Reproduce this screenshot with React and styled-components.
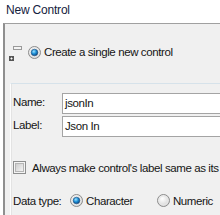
import React from "react";
import styled, { createGlobalStyle } from "styled-components";

const Global = createGlobalStyle`
  html, body { margin: 0; padding: 0; background: #ffffff; overflow: hidden; }
  body { font-family: "Liberation Sans", Arial, sans-serif; font-size: 11.5px; letter-spacing: -0.4px; color: #151515; }
`;

const Frame = styled.div`
  width: 220px;
  height: 215px;
  overflow: hidden;
  display: flex;
  flex-direction: column;
  background: #ffffff;
`;

const Title = styled.div`
  height: 23px;
  padding-left: 6px;
  line-height: 20px;
  font-size: 12px;
  letter-spacing: -0.2px;
  color: #14213d;
`;

const Panel = styled.div`
  flex: 1;
  margin-left: 3px;
  border-top: 1px solid #a0a0a0;
  border-left: 2px solid #8f8f8f;
  background: #f0f0f0;
  padding-top: 20px;
  display: flex;
  flex-direction: column;
`;

const TreeRow = styled.div`
  display: flex;
  align-items: center;
  height: 16px;
  padding-left: 3px;
`;

const RadioLabel = styled.label`
  display: flex;
  align-items: center;
  gap: ${(p) => p.$gap || 3}px;
  white-space: nowrap;
  margin-left: ${(p) => p.$ml || 0}px;
`;

const Group = styled.div`
  margin-top: 23px;
  margin-left: 5px;
  border-top: 1px solid #d6e2ea;
  border-left: 1px solid #fdfdfd;
  box-shadow: inset 1px 0 0 #e3e3e3;
  padding: 9px 0 0 2px;
  flex: 1;
  display: flex;
  flex-direction: column;
`;

const FormGrid = styled.div`
  display: grid;
  grid-template-columns: 49px 1fr;
  row-gap: 2px;
  align-items: center;
`;

const FieldLabel = styled.span`
  padding-bottom: 3px;
`;

const Input = styled.div`
  height: 19px;
  border: 1px solid #a4a4a4;
  border-right: none;
  background: #ffffff;
  padding-left: 2px;
  line-height: 19px;
  box-sizing: content-box;
`;

const CheckRow = styled.label`
  margin-top: 24px;
  display: flex;
  align-items: center;
  gap: 6px;
  white-space: nowrap;
  height: 13px;
`;

const DataRow = styled.div`
  margin-top: 20px;
  display: flex;
  align-items: center;
  height: 13px;
  white-space: nowrap;
`;

const DataLabel = styled.span`
  width: 57px;
`;

const ExpandIcon = () => (
  <svg width="16" height="18" viewBox="0 0 16 18" style={{ display: "block" }}>
    <rect x="5.5" y="3.5" width="8" height="3" fill="#f4f4f4" stroke="#9a9a9a" />
    <rect x="1" y="13" width="5" height="5" fill="#555" />
    <path d="M2.5 15.5h2M3.5 14.5v2" stroke="#fff" strokeWidth="1" />
  </svg>
);

const Radio = ({ checked }) => (
  <svg width="13" height="13" viewBox="0 0 13 13" style={{ display: "block", flex: "none" }}>
    <defs>
      <radialGradient id="rb" cx="0.4" cy="0.35" r="0.7">
        <stop offset="0" stopColor="#ffffff" />
        <stop offset="1" stopColor="#d2d2d2" />
      </radialGradient>
      <radialGradient id="dot" cx="0.4" cy="0.35" r="0.7">
        <stop offset="0" stopColor="#9fe2ff" />
        <stop offset="0.5" stopColor="#1b8fd6" />
        <stop offset="1" stopColor="#0b3f79" />
      </radialGradient>
    </defs>
    <circle cx="6.5" cy="6.5" r="6" fill="url(#rb)" stroke="#8c8c8c" strokeWidth="1" />
    <circle cx="6.5" cy="6.5" r="4.5" fill="none" stroke="#e8e8e8" strokeWidth="1" />
    {checked && <circle cx="6.5" cy="6.5" r="3.3" fill="url(#dot)" stroke="#1e4d7d" strokeWidth="0.6" />}
  </svg>
);

const Checkbox = () => (
  <svg width="13" height="13" viewBox="0 0 13 13" style={{ display: "block", flex: "none" }}>
    <defs>
      <linearGradient id="cb" x1="0" y1="0" x2="1" y2="1">
        <stop offset="0" stopColor="#cbcbcb" />
        <stop offset="1" stopColor="#f6f6f6" />
      </linearGradient>
    </defs>
    <rect x="0.5" y="0.5" width="12" height="12" fill="#f4f4f4" stroke="#8e8f8f" />
    <rect x="2.5" y="2.5" width="8" height="8" fill="url(#cb)" stroke="#b5b5b5" />
  </svg>
);

export default function App() {
  return (
    <>
      <Global />
      <Frame>
        <Title>New Control</Title>
        <Panel>
          <TreeRow>
            <ExpandIcon />
            <RadioLabel $ml={4}>
              <Radio checked />
              Create a single new control
            </RadioLabel>
          </TreeRow>
          <Group>
            <FormGrid>
              <FieldLabel>Name:</FieldLabel>
              <Input>jsonIn</Input>
              <FieldLabel>Label:</FieldLabel>
              <Input>Json In</Input>
            </FormGrid>
            <CheckRow>
              <Checkbox />
              Always make control's label same as its
            </CheckRow>
            <DataRow>
              <DataLabel>Data type:</DataLabel>
              <RadioLabel>
                <Radio checked />
                Character
              </RadioLabel>
              <RadioLabel $ml={24}>
                <Radio />
                Numeric
              </RadioLabel>
            </DataRow>
          </Group>
        </Panel>
      </Frame>
    </>
  );
}
